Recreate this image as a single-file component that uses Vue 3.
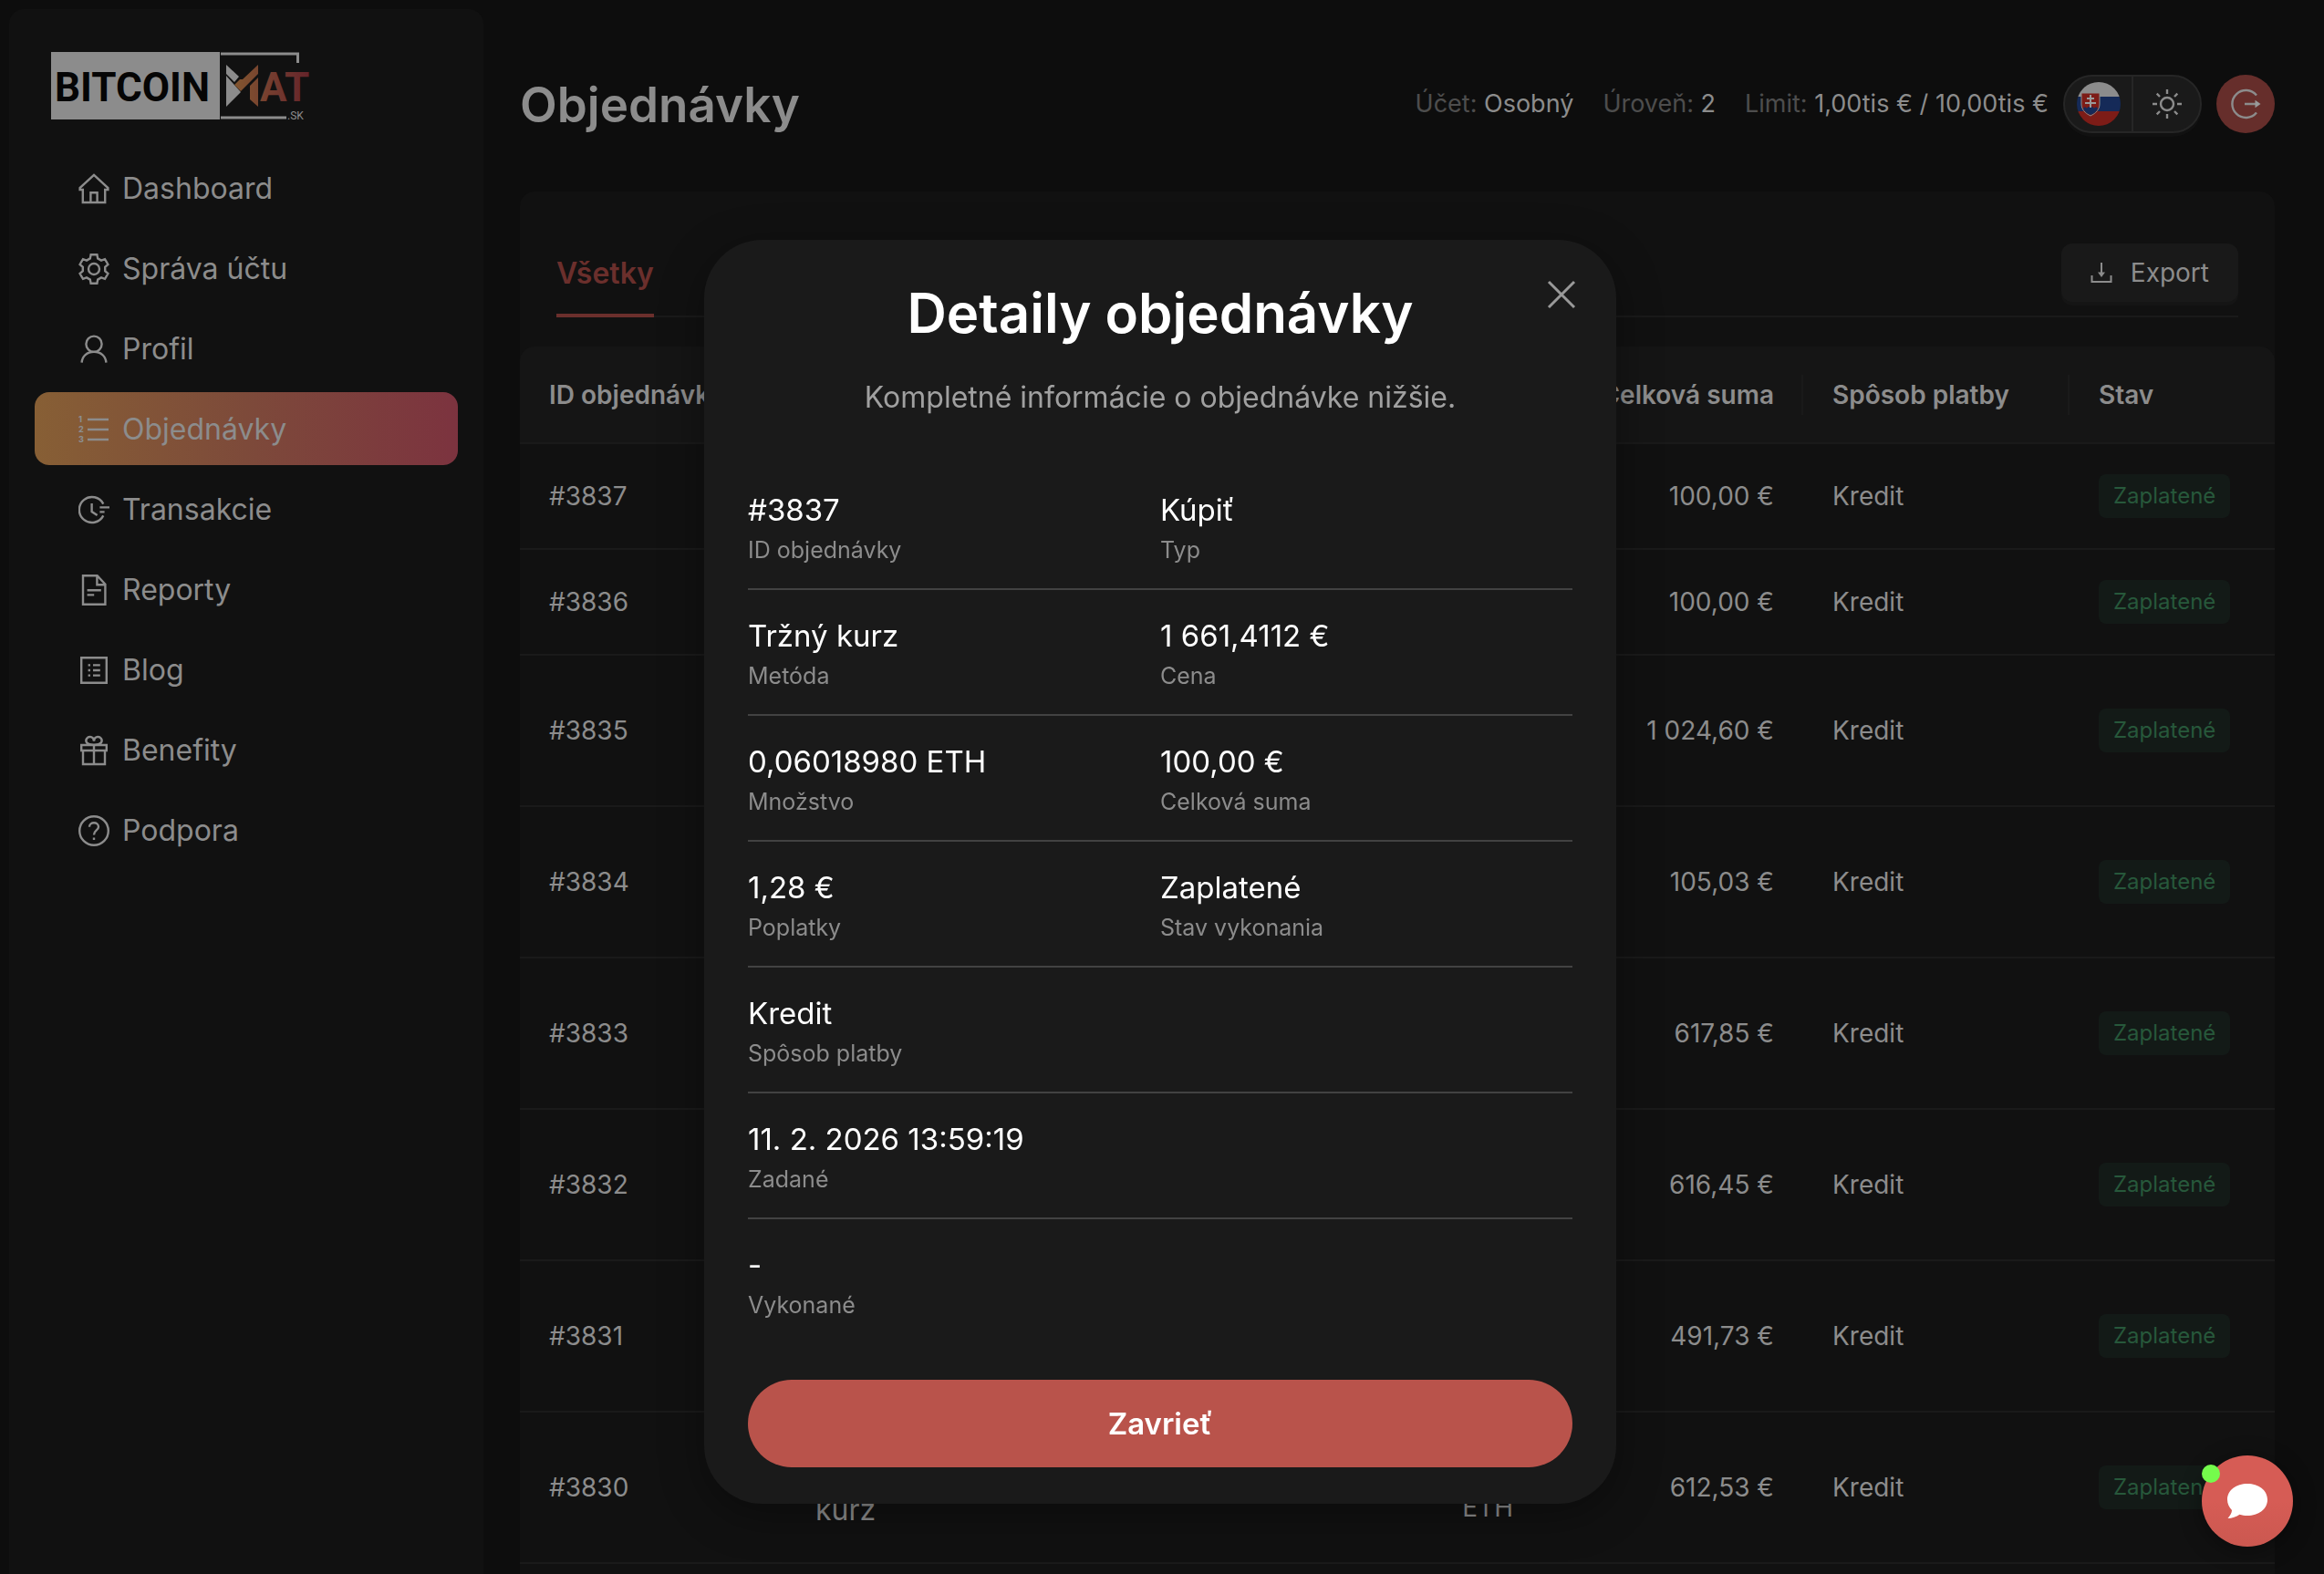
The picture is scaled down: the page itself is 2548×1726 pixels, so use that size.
<script setup>
import { ref, computed } from "vue";

const menu = [
  { icon: "home", label: "Dashboard" },
  { icon: "gear", label: "Správa účtu" },
  { icon: "user", label: "Profil" },
  { icon: "list", label: "Objednávky", active: true },
  { icon: "clock", label: "Transakcie" },
  { icon: "file", label: "Reporty" },
  { icon: "blog", label: "Blog" },
  { icon: "gift", label: "Benefity" },
  { icon: "help", label: "Podpora" },
];

const icons = {
  home: "M4.8 18H1.6V16L17 1.8 32.4 16v2h-3.2V32H4.8zM13.4 32V21.2h7.2V32",
  gear: "M13.6 1.2h6.8L21.2 5.4 25 7.6 29 6.2 32.4 12 29.2 14.8V19.2L32.4 22 29 27.8 25 26.4 21.2 28.6 20.4 32.8H13.6L12.8 28.6 9 26.4 5 27.8 1.6 22 4.8 19.2V14.8L1.6 12 5 6.2 9 7.6 12.8 5.4zM17 11a6 6 0 1 0 0 12a6 6 0 1 0 0-12z",
  user: "M17 2.6a8.6 8.6 0 1 0 0 17.2a8.6 8.6 0 1 0 0-17.2zM3.6 31.6C4 24.6 9.4 19.8 17 19.8S30 24.6 30.4 31.6",
  list: "M10 6H33M10 17H33M10 28H33",
  clock: "M27.3 10.6A14 14 0 1 0 27.3 23.4M14.6 10V19L20.6 23M23.4 14.4H34M23.4 19.4H28.6",
  file: "M5 1.2H20.6L29.4 10.6V32.8H5zM20.4 1.4V11.2H29.4M9.6 17.2H24.8M9.6 22.4H17.2",
  blog: "M3.2 3.2H30.8V30.8H3.2zM10.6 11.4H13M10.6 17H13M10.6 22.6H13M16 11.4H23.8M16 17H23.8M16 22.6H23.8",
  gift: "M3.2 11H30.8V17H3.2zM5 17V32H29V17M17 11V32M17 10.6C8 10.6 7.4 6.4 9.2 3.8C11.4 1 16.6 1.4 17 6.6C17.4 1.4 22.6 1 24.8 3.8C26.6 6.4 26 10.6 17 10.6",
  help: "M17 1.2a15.8 15.8 0 1 0 0 31.6a15.8 15.8 0 1 0 0-31.6zM12 12.8C12 6.8 22 6.8 22 12.8C22 16.6 17 16.4 17 21.4M17 24.4V27",
};

const orders = [
  { id: 3837, method: "Trh", price: "1 661,41 €", amount: "0,06 ETH", total: "100,00 €" },
  { id: 3836, method: "Trh", price: "1 661,40 €", amount: "0,06 ETH", total: "100,00 €" },
  { id: 3835, total: "1 024,60 €" },
  { id: 3834, total: "105,03 €" },
  { id: 3833, total: "617,85 €" },
  { id: 3832, total: "616,45 €" },
  { id: 3831, total: "491,73 €" },
  { id: 3830, total: "612,53 €" },
];

const rows = computed(() =>
  orders.map((o) => ({
    method: "Tržný kurz",
    price: "1 700,00 €",
    amount: "0,36018980 ETH",
    ...o,
  }))
);

const details = [
  [["#3837", "ID objednávky"], ["Kúpiť", "Typ"]],
  [["Tržný kurz", "Metóda"], ["1 661,4112 €", "Cena"]],
  [["0,06018980 ETH", "Množstvo"], ["100,00 €", "Celková suma"]],
  [["1,28 €", "Poplatky"], ["Zaplatené", "Stav vykonania"]],
  [["Kredit", "Spôsob platby"]],
  [["11. 2. 2026 13:59:19", "Zadané"]],
  [["-", "Vykonané"]],
];

const open = ref(true);
</script>

<template>
  <div class="page">
    <aside class="sidebar">
      <a href="#" class="logo" aria-label="Bitcoinmat.sk">
        <svg width="290" height="76" viewBox="0 0 290 76">
          <defs>
            <linearGradient id="brand" gradientUnits="userSpaceOnUse" x1="200" y1="0" x2="284" y2="0">
              <stop offset="0" stop-color="#82562f" />
              <stop offset="0.5" stop-color="#743c2f" />
              <stop offset="1" stop-color="#64232a" />
            </linearGradient>
          </defs>
          <rect width="185" height="74" fill="#8c8c8c" />
          <text x="4" y="54" class="logo-word" fill="#050505">BITCOIN</text>
          <path d="M186 2H270.500V12M186 72H258" fill="none" stroke="#8c8c8c" stroke-width="3" />
          <path d="M192 14L206 27 201 33 192 24zM192 26L208 44 192 60z" fill="#8c8c8c" />
          <path d="M201 36L207 30H210L227 14V24L208 43zM218 37L227 28V60L218 52z" fill="url(#brand)" />
          <text x="229" y="54" class="logo-word" fill="url(#brand)">AT</text>
          <text x="259" y="74" class="logo-tld" fill="#8c8c8c">.SK</text>
        </svg>
      </a>
      <nav class="menu">
        <a v-for="m in menu" :key="m.icon" href="#" class="menu-item" :class="{ active: m.active }">
          <svg class="icon" width="34" height="34" viewBox="0 0 34 34">
            <path :d="icons[m.icon]" />
            <g v-if="m.icon === 'list'" class="nums">
              <text x="0" y="9">1</text>
              <text x="0" y="20">2</text>
              <text x="0" y="31">3</text>
            </g>
          </svg>
          <span>{{ m.label }}</span>
        </a>
      </nav>
    </aside>

    <main class="main">
      <header class="header">
        <h1>Objednávky</h1>
        <div class="account">
          <span>Účet: <b>Osobný</b></span>
          <span>Úroveň: <b>2</b></span>
          <span>Limit: <b>1,00tis € / 10,00tis €</b></span>
        </div>
        <div class="switches">
          <button type="button" class="switch" aria-label="Slovenčina">
            <svg width="48" height="48" viewBox="0 0 48 48">
              <clipPath id="round"><circle cx="24" cy="24" r="24" /></clipPath>
              <g clip-path="url(#round)">
                <rect width="48" height="16" fill="#8c8c8c" />
                <rect y="16" width="48" height="16" fill="#152a58" />
                <rect y="32" width="48" height="16" fill="#7d1c17" />
              </g>
              <path d="M5 12H25V24C25 30 21 34 15 37C9 34 5 30 5 24z" fill="#7d1c17" stroke="#8c8c8c" stroke-width="1" />
              <path d="M7 29C8 27 10 27 11 29C12 26 18 26 19 29C20 27 22 27 23 29C21 33 18 35 15 36C12 35 9 33 7 29z" fill="#152a58" />
              <path d="M15 14V28M11 18H19M9 23H21" stroke="#9a9a9a" stroke-width="2" />
            </svg>
          </button>
          <button type="button" class="switch" aria-label="Svetlý režim">
            <svg class="icon" width="34" height="34" viewBox="0 0 34 34">
              <circle cx="17" cy="17" r="7" />
              <path d="M17 1V6M17 28V33M1 17H6M28 17H33M5.700 5.700L9 9M25 25L28.300 28.300M28.300 5.700L25 9M9 25L5.700 28.300" />
            </svg>
          </button>
        </div>
        <button type="button" class="logout" aria-label="Odhlásiť">
          <svg class="icon" width="34" height="34" viewBox="0 0 34 34">
            <path d="M29 7.500A15 15 0 1 0 29 26.500M16 17H28" />
            <path d="M27.500 12.800L33.500 17 27.500 21.200z" fill="#999" stroke="none" />
          </svg>
        </button>
      </header>

      <section class="card">
        <div class="tabs">
          <button type="button" class="tab">Všetky</button>
          <button type="button" class="export">
            <svg width="24" height="24" viewBox="0 0 24 24">
              <path d="M12 1V13M1.500 15V22H22.500V15" fill="none" stroke="#8c8c8c" stroke-width="2" />
              <path d="M8 11.500H16L12 17z" fill="#8c8c8c" />
            </svg>
            Export
          </button>
        </div>
        <table class="orders">
          <colgroup>
            <col class="c-id" />
            <col class="c-method" />
            <col />
            <col class="c-amount" />
            <col class="c-total" />
            <col class="c-pay" />
            <col class="c-state" />
          </colgroup>
          <thead>
            <tr>
              <th>ID objednávky</th>
              <th>Metóda</th>
              <th class="right">Cena</th>
              <th class="right">Množstvo</th>
              <th class="right">Celková suma</th>
              <th>Spôsob platby</th>
              <th>Stav</th>
            </tr>
          </thead>
          <tbody>
            <tr v-for="r in rows" :key="r.id">
              <td>#{{ r.id }}</td>
              <td class="method">{{ r.method }}</td>
              <td class="right">{{ r.price }}</td>
              <td class="right">{{ r.amount }}</td>
              <td class="right">{{ r.total }}</td>
              <td>Kredit</td>
              <td><span class="badge">Zaplatené</span></td>
            </tr>
          </tbody>
        </table>
      </section>
    </main>

    <div v-if="open" class="mask">
      <div class="modal" role="dialog" aria-labelledby="modal-title">
        <button type="button" class="close" aria-label="Zavrieť okno" @click="open = false">
          <svg width="32" height="32" viewBox="0 0 32 32">
            <path d="M2 2L30 30M30 2L2 30" fill="none" stroke="#999" stroke-width="3" />
          </svg>
        </button>
        <h2 id="modal-title">Detaily objednávky</h2>
        <p class="subtitle">Kompletné informácie o objednávke nižšie.</p>
        <dl class="details">
          <div v-for="(line, i) in details" :key="i" class="line">
            <div v-for="[value, label] in line" :key="label" class="pair">
              <dt>{{ label }}</dt>
              <dd>{{ value }}</dd>
            </div>
          </div>
        </dl>
        <button type="button" class="confirm" @click="open = false">Zavrieť</button>
      </div>
    </div>

    <button type="button" class="chat" aria-label="Chat">
      <svg width="44" height="40" viewBox="0 0 44 40">
        <path d="M22 1C34 1 44 8 44 18.500S34 36 22 36C19 36 16 35.600 13.500 34.800C10 37.500 5 39 0.500 39C3 36 5 33 5 30C2 27 0 23 0 18.500C0 8 10 1 22 1z" fill="#fff" />
      </svg>
      <span class="online"></span>
    </button>
  </div>
</template>

<style>
body {
  margin: 0;
  background: #0d0d0d;
}
</style>

<style scoped>
.page {
  display: flex;
  gap: 40px;
  height: 100vh;
  overflow: hidden;
  box-sizing: border-box;
  padding: 10px 54px 0 10px;
  background: #0d0d0d;
  color: #8c8c8c;
  font-family: Inter, "Liberation Sans", sans-serif;
  font-size: 28px;
  line-height: 44px;
}

button {
  padding: 0;
  border: 0;
  background: none;
  color: inherit;
  font: inherit;
  cursor: pointer;
}

a {
  color: inherit;
  text-decoration: none;
}

.icon {
  flex: none;
  fill: none;
  stroke: #8c8c8c;
  stroke-width: 2.4;
}

.sidebar {
  flex: none;
  width: 520px;
  box-sizing: border-box;
  padding: 47px 28px 0;
  border-radius: 16px 16px 0 0;
  background: #111;
}

.logo {
  display: block;
  height: 76px;
  margin: 0 18px 33px;
}

.logo-word {
  font-family: Roboto, "Liberation Sans", sans-serif;
  font-size: 44px;
  font-weight: bold;
}

.logo-tld {
  font-family: Roboto, "Liberation Sans", sans-serif;
  font-size: 12px;
}

.menu {
  display: flex;
  flex-direction: column;
  gap: 8px;
}

.menu-item {
  display: flex;
  align-items: center;
  gap: 14px;
  height: 80px;
  box-sizing: border-box;
  padding: 2px 48px 0;
  border-radius: 16px;
  font-size: 32px;
}

.menu-item.active {
  background: linear-gradient(90deg, #875f35, #7d4a3a 50%, #7c333f);
}

.nums {
  fill: #8c8c8c;
  stroke: none;
  font-size: 9px;
  font-weight: 800;
}

.main {
  display: flex;
  flex: 1;
  flex-direction: column;
  min-width: 0;
}

.header {
  display: flex;
  flex: none;
  align-items: flex-start;
  height: 200px;
  box-sizing: border-box;
  padding-top: 72px;
}

h1 {
  margin: 0 auto 0 0;
  font-size: 53px;
  font-weight: 600;
  line-height: 66px;
}

.account {
  display: flex;
  gap: 32px;
  padding: 10px 16px 0 0;
  color: #4d4d4d;
  font-size: 27px;
}

.account b {
  color: #8c8c8c;
  font-weight: 400;
}

.switches {
  display: flex;
  height: 64px;
  box-sizing: border-box;
  margin-right: 16px;
  border: 2px solid #262626;
  border-radius: 32px;
  background: #1a1a1a;
  box-shadow: 0 4px 0 #111;
}

.switch {
  display: flex;
  align-items: center;
  justify-content: center;
  width: 73px;
}

.switch + .switch {
  width: 75px;
  border-left: 2px solid #262626;
}

.logout {
  display: flex;
  align-items: center;
  justify-content: center;
  width: 64px;
  height: 64px;
  border-radius: 32px;
  background: #662e2b;
}

.card {
  flex: 1 0 auto;
  border-radius: 16px 16px 0 0;
  background: #111;
}

.tabs {
  display: flex;
  align-items: flex-end;
  justify-content: space-between;
  height: 136px;
  margin: 0 40px 32px;
  border-bottom: 2px solid #1a1a1a;
}

.tab {
  height: 80px;
  margin-bottom: -2px;
  padding-bottom: 12px;
  box-sizing: border-box;
  border-bottom: 4px solid #6b2f2c;
  color: #6b2f2c;
  font-size: 32px;
  font-weight: 600;
}

.export {
  display: flex;
  align-items: center;
  gap: 20px;
  height: 64px;
  margin-bottom: 15px;
  padding: 0 32px;
  border-radius: 12px;
  background: #191919;
  box-shadow: 0 4px 0 #151515;
}

.orders {
  width: 100%;
  table-layout: fixed;
  border-collapse: separate;
  border-spacing: 0;
}

.c-id { width: 292px; }
.c-method { width: 200px; }
.c-amount { width: 240px; }
.c-total { width: 286px; }
.c-pay { width: 292px; }
.c-state { width: 225px; }

th,
td {
  box-sizing: border-box;
  padding: 0 32px;
  border-bottom: 2px solid #1a1a1a;
  text-align: left;
}

th {
  height: 107px;
  background: linear-gradient(#1a1a1a, #1a1a1a) right center / 2px 44px no-repeat #151515;
  font-weight: 600;
  white-space: nowrap;
}

th:first-child {
  border-top-left-radius: 16px;
}

th:last-child {
  border-top-right-radius: 16px;
  background: #151515;
}

td {
  height: 116px;
  padding: 32px;
}

.right {
  text-align: right;
}

.method {
  font-size: 32px;
  line-height: 50px;
}

.badge {
  display: inline-block;
  padding: 0 16px;
  border-radius: 8px;
  background: #131a17;
  color: #27583b;
  font-size: 24px;
  line-height: 48px;
  vertical-align: middle;
}

.mask {
  position: fixed;
  inset: 0;
  display: flex;
  align-items: flex-start;
  justify-content: center;
  padding: 263px 4px 0 0;
}

.modal {
  position: relative;
  width: 1000px;
  box-sizing: border-box;
  padding: 40px 48px;
  border-radius: 64px;
  background: #1a1a1a;
  box-shadow: 0 12px 48px rgba(0, 0, 0, 0.35);
  color: #fff;
}

.close {
  position: absolute;
  top: 44px;
  right: 44px;
  display: flex;
}

h2 {
  margin: 0;
  font-size: 60px;
  font-weight: 600;
  line-height: 80px;
  text-align: center;
}

.subtitle {
  margin: 28px 0 48px;
  color: #a0a0a0;
  font-size: 32px;
  line-height: 50px;
  text-align: center;
}

.details {
  margin: 0 0 40px;
}

.line {
  display: flex;
  padding: 24px 0;
  border-bottom: 2px solid #424242;
}

.line:last-child {
  border-bottom: 0;
}

.pair {
  display: flex;
  flex: 0 0 50%;
  flex-direction: column-reverse;
}

dt {
  color: #8c8c8c;
  font-size: 25px;
  line-height: 36px;
}

dd {
  margin: 0;
  font-size: 33px;
  line-height: 52px;
}

.confirm {
  display: block;
  width: 100%;
  height: 96px;
  border-radius: 48px;
  background: #b9534b;
  color: #fff;
  font-size: 33px;
  font-weight: 600;
}

.chat {
  position: fixed;
  right: 34px;
  bottom: 30px;
  display: flex;
  align-items: center;
  justify-content: center;
  width: 100px;
  height: 100px;
  border-radius: 50px;
  background: linear-gradient(#d65c55 50%, #cb5850);
  box-shadow: 0 4px 24px rgba(0, 0, 0, 0.4);
}

.online {
  position: absolute;
  top: 10px;
  left: 0;
  width: 20px;
  height: 20px;
  border-radius: 10px;
  background: #75fb4c;
}
</style>
